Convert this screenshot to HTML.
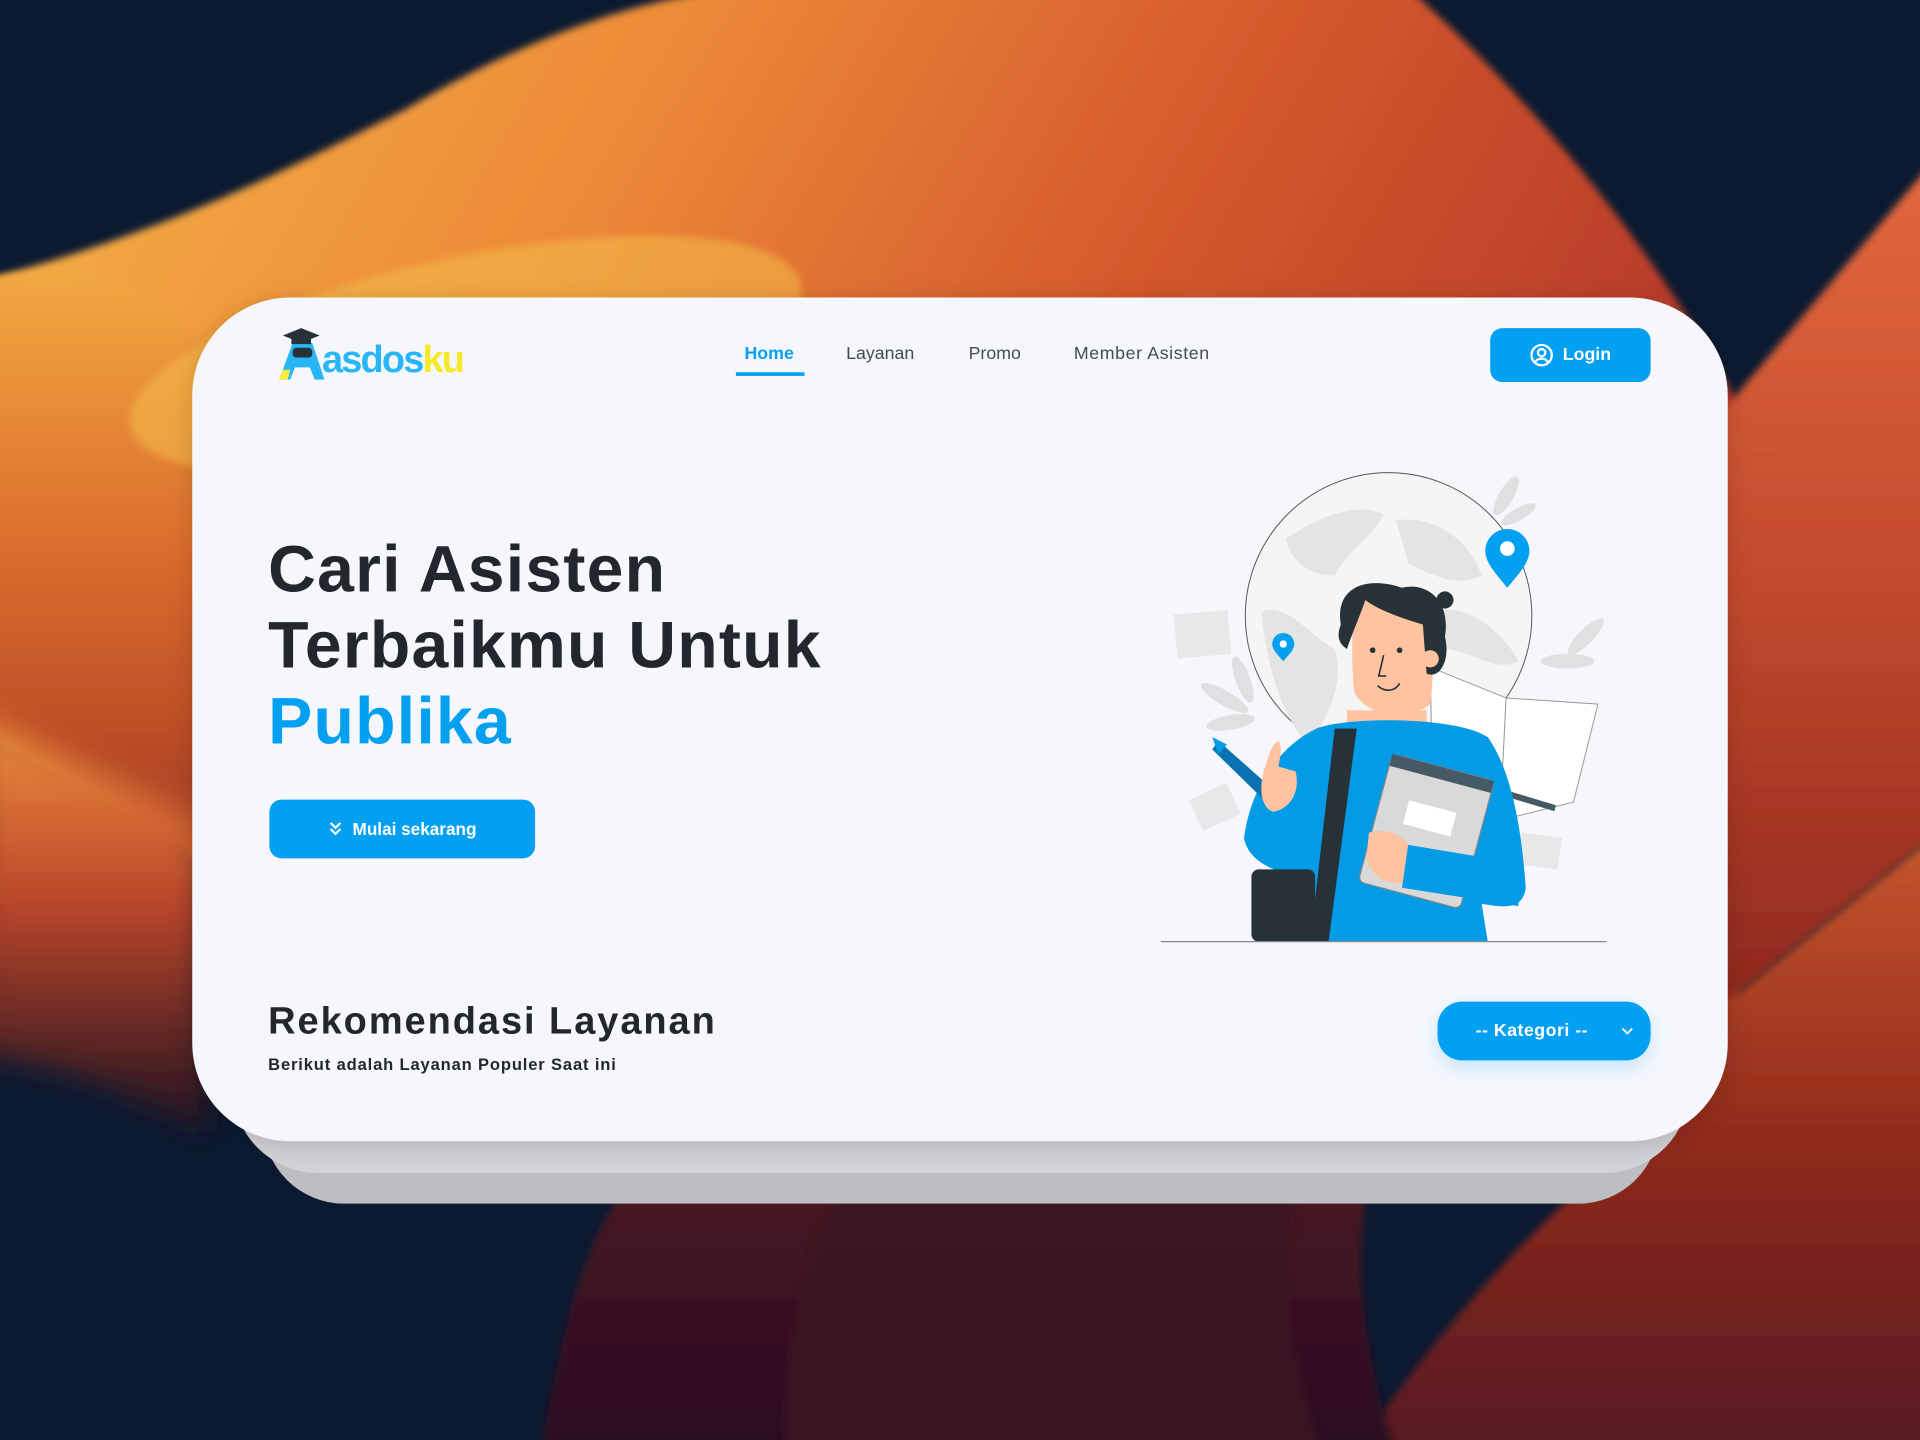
<!DOCTYPE html>
<html><head><meta charset="utf-8"><style>
html,body{margin:0;padding:0;width:1920px;height:1440px;overflow:hidden;background:#0b1a31;}
#s{position:absolute;left:0;top:0;width:1568px;height:1176px;transform:scale(1.22449);transform-origin:0 0;font-family:"Liberation Sans",sans-serif;}
.abs{position:absolute;}
.card{left:157px;top:243px;width:1254px;height:689px;border-radius:80px;background:#f5f7fc;}
.l2{left:190px;top:300px;width:1190px;height:658px;border-radius:70px;background:#d2d3d7;}
.l3{left:215px;top:330px;width:1140px;height:653px;border-radius:66px;background:#bdbec2;}
.nav{top:281px;font-size:14.5px;color:#454a52;}
.btn{background:#039ff0;color:#fff;font-weight:bold;display:flex;align-items:center;justify-content:center;}
h1{margin:0;position:absolute;left:219px;top:434px;font-size:54px;line-height:62px;font-weight:bold;color:#23262d;letter-spacing:1px;}
</style></head><body><div id="s">
<svg class="abs" style="left:0;top:0" width="1568" height="1176" viewBox="0 0 1568 1176">
<defs>
<linearGradient id="g1" x1="0" y1="0" x2="1" y2="0.4"><stop offset="0" stop-color="#f6b548"/><stop offset="0.35" stop-color="#ec8a38"/><stop offset="0.65" stop-color="#d4582c"/><stop offset="1" stop-color="#b0352a"/></linearGradient>
<linearGradient id="g0" x1="0" y1="0" x2="0" y2="1"><stop offset="0" stop-color="#f2a840"/><stop offset="0.5" stop-color="#d96a2c"/><stop offset="1" stop-color="#a33a24"/></linearGradient>
<linearGradient id="g2" x1="0" y1="0" x2="0" y2="1"><stop offset="0" stop-color="#ee903c"/><stop offset="0.45" stop-color="#b8452a"/><stop offset="1" stop-color="#1a1020"/></linearGradient>
<linearGradient id="g3" x1="0" y1="0" x2="0" y2="1"><stop offset="0" stop-color="#e2683f"/><stop offset="0.5" stop-color="#c24a2c"/><stop offset="1" stop-color="#8e281e"/></linearGradient>
<linearGradient id="g5" x1="0" y1="0" x2="0" y2="1"><stop offset="0" stop-color="#c4552c"/><stop offset="0.5" stop-color="#902a1c"/><stop offset="1" stop-color="#571a22"/></linearGradient>
<linearGradient id="g4" x1="0" y1="0" x2="0" y2="1"><stop offset="0" stop-color="#4a1622"/><stop offset="1" stop-color="#2a0c22"/></linearGradient>
<filter id="b"><feGaussianBlur stdDeviation="3"/></filter>
<filter id="b2"><feGaussianBlur stdDeviation="12"/></filter>
</defs>
<rect width="1568" height="1176" fill="#0b1a31"/>
<path filter="url(#b)" d="M-10,228 C150,185 250,130 330,90 C430,30 520,0 600,-10 L1150,-10 C1250,80 1350,200 1420,330 L1420,960 L320,960 C240,940 200,900 175,850 L160,700 L-10,600 Z" fill="url(#g1)"/>
<path filter="url(#b)" d="M-10,228 C80,210 140,240 180,300 L180,700 L-10,600 Z" fill="url(#g0)"/>
<ellipse cx="380" cy="290" rx="280" ry="80" transform="rotate(-12 380 290)" fill="#f6bd4c" opacity="0.55" filter="url(#b)"/>
<path filter="url(#b2)" d="M-20,583 L170,670 L170,930 C110,890 50,870 -20,860 Z" fill="url(#g2)"/>
<path filter="url(#b)" d="M1405,338 L1575,136 L1575,686 L1405,822 Z" fill="url(#g3)"/>
<path filter="url(#b)" d="M1405,822 L1575,686 L1575,1180 L1110,1180 C1200,1050 1300,950 1405,880 Z" fill="url(#g5)"/>
<path filter="url(#b)" d="M440,1190 C460,1080 480,1000 520,960 L1120,960 C1100,1040 1120,1120 1140,1190 Z" fill="url(#g4)"/>
<path filter="url(#b)" d="M640,1190 C640,1080 660,1000 700,960 L1060,960 C1040,1060 1060,1120 1080,1190 Z" fill="#3b1420" opacity="0.85"/>
</svg>
<div class="abs l3"></div>
<div class="abs l2"></div>
<div class="abs card" style="box-shadow:0 4px 20px rgba(0,0,0,0.15)"></div>

<!-- logo -->
<svg class="abs" style="left:225px;top:266px" width="170" height="48" viewBox="0 0 170 48">
<path d="M3,44 L14,14 L30,14 L40,44 L32,44 L28,34 L16,34 L12,44 Z" fill="#29b6f6"/>
<path d="M3,44 L6,36 L12,36 L10,44 Z" fill="#ffeb3b"/>
<rect x="14" y="18" width="16" height="8" rx="3" fill="#263238"/>
<path d="M6,8 L21,2 L36,8 L21,14 Z" fill="#263238"/><rect x="13" y="9" width="16" height="6" fill="#263238"/>
<text x="38" y="38" font-family="Liberation Sans" font-weight="bold" font-size="31" letter-spacing="-1.5" fill="#29b6f6">asdos<tspan fill="#f5e92a">ku</tspan></text>
</svg>

<div class="abs nav" style="left:608px;color:#039ff0;font-weight:bold">Home</div>
<div class="abs" style="left:601px;top:304px;width:56px;height:3px;background:#039ff0"></div>
<div class="abs nav" style="left:691px">Layanan</div>
<div class="abs nav" style="left:791px">Promo</div>
<div class="abs nav" style="left:877px;letter-spacing:0.5px">Member Asisten</div>

<div class="abs btn" style="left:1217px;top:268px;width:131px;height:44px;border-radius:10px;font-size:14.5px">
<svg width="20" height="20" viewBox="0 0 20 20" style="margin-right:7px"><circle cx="10" cy="10" r="8.3" fill="none" stroke="#fff" stroke-width="1.8"/><circle cx="10" cy="8" r="3" fill="none" stroke="#fff" stroke-width="1.8"/><path d="M5,15.5 C7,12 13,12 15,15.5" fill="none" stroke="#fff" stroke-width="1.8"/></svg>Login</div>

<h1>Cari Asisten<br>Terbaikmu Untuk<br><span style="color:#039ff0">Publika</span></h1>

<div class="abs btn" style="left:220px;top:653px;width:217px;height:48px;border-radius:10px;font-size:14px">
<svg width="12" height="14" viewBox="0 0 12 14" style="margin-right:8px"><path d="M2,2 L6,6 L10,2 M2,7 L6,11 L10,7" fill="none" stroke="#fff" stroke-width="1.8"/></svg>Mulai sekarang</div>

<div class="abs" style="left:219px;top:816px;font-size:31px;font-weight:bold;color:#23262d;letter-spacing:1.6px">Rekomendasi Layanan</div>
<div class="abs" style="left:219px;top:862px;font-size:13.5px;font-weight:bold;color:#23262d;letter-spacing:0.7px">Berikut adalah Layanan Populer Saat ini</div>

<div class="abs btn" style="left:1174px;top:818px;width:174px;height:48px;border-radius:20px;font-size:14.5px;box-shadow:0 6px 16px rgba(3,159,240,0.2)">
<span style="margin-right:20px;letter-spacing:0.4px">-- Kategori --</span>
<svg class="abs" style="right:14px;top:20px" width="10" height="8" viewBox="0 0 10 8"><path d="M1,2 L5,6 L9,2" fill="none" stroke="#fff" stroke-width="1.5"/></svg></div>

<!-- illustration -->
<svg class="abs" style="left:940px;top:380px" width="380" height="395" viewBox="0 0 380 395">
<circle cx="194" cy="123" r="117" fill="#f5f5f5" stroke="#555" stroke-width="0.8"/>
<path d="M110,60 C140,40 170,30 190,40 C180,60 160,70 150,90 C130,90 115,80 110,60Z M200,45 C230,40 260,60 270,90 C250,100 230,90 210,80Z M90,120 C110,110 130,140 150,150 C160,180 140,210 130,230 C110,210 95,170 90,120Z M230,120 C260,110 290,140 300,160 C280,170 260,150 240,150Z" fill="#e4e4e4"/>
<g fill="#e0e0e0"><ellipse cx="290" cy="25" rx="6" ry="18" transform="rotate(30 290 25)"/><ellipse cx="300" cy="40" rx="16" ry="5" transform="rotate(-30 300 40)"/><ellipse cx="355" cy="140" rx="20" ry="6" transform="rotate(-45 355 140)"/><ellipse cx="340" cy="160" rx="22" ry="6"/><ellipse cx="60" cy="190" rx="22" ry="6" transform="rotate(30 60 190)"/><ellipse cx="65" cy="210" rx="20" ry="6" transform="rotate(-10 65 210)"/><ellipse cx="75" cy="175" rx="6" ry="20" transform="rotate(-20 75 175)"/></g>
<g fill="#e8e8e8"><rect x="20" y="120" width="44" height="36" transform="rotate(-5 42 138)"/><rect x="35" y="265" width="34" height="28" transform="rotate(-25 52 279)"/><rect x="300" y="302" width="34" height="26" transform="rotate(8 317 315)"/></g>
<path d="M291,52 C281,52 273,60 273,70 C273,80 283,90 291,100 C299,90 309,80 309,70 C309,60 301,52 291,52Z" fill="#039ff0"/><circle cx="291" cy="68" r="6" fill="#fff"/>
<path d="M108,137 C103,137 99,141 99,146 C99,151 104,155 108,160 C112,155 117,151 117,146 C117,141 113,137 108,137Z" fill="#039ff0"/><circle cx="108" cy="146" r="3" fill="#fff"/>
<path d="M228,165 L290,190 L285,290 L230,265 Z" fill="#fff" stroke="#999" stroke-width="0.8"/>
<path d="M290,190 L365,195 L345,275 L285,290 Z" fill="#fff" stroke="#999" stroke-width="0.8"/>
<path d="M280,265 L330,280" stroke="#455a64" stroke-width="5"/>
<path d="M160,200 L225,200 L225,215 L160,215Z" fill="#ffc3a0"/>
<path d="M135,215 C160,205 250,205 275,222 C295,250 303,300 306,345 C304,362 290,362 270,358 L275,389 L130,389 L128,345 C110,330 82,330 76,305 C80,270 100,232 135,215 Z" fill="#039be5"/>
<path d="M55,225 L100,265 L92,273 L50,232 Z" fill="#0a72b0"/><path d="M50,222 L62,228 L55,236Z" fill="#039be5"/>
<path d="M92,250 C95,240 98,228 104,225 C108,230 105,240 104,246 L118,250 C122,265 115,280 100,283 C90,280 88,265 92,250Z" fill="#ffc3a0"/>
<path d="M150,215 L168,215 L145,389 L130,389 Z" fill="#263238"/>
<rect x="82" y="330" width="52" height="59" rx="6" fill="#263238"/>
<g transform="rotate(15 225 298)"><rect x="182" y="245" width="86" height="108" rx="5" fill="#d9d9d9" stroke="#888" stroke-width="1"/><rect x="182" y="245" width="86" height="10" fill="#455a64"/><rect x="205" y="278" width="40" height="20" fill="#fff"/></g>
<path d="M178,300 C195,295 212,305 215,320 L210,340 C195,345 178,335 176,320Z" fill="#ffc3a0"/>
<path d="M210,310 L300,325 L300,360 L205,345 Z" fill="#039be5"/>
<path d="M165,110 C165,130 163,160 166,185 C175,205 210,210 228,195 C232,170 230,130 225,110 Z" fill="#ffc3a0"/>
<path d="M155,130 C150,100 175,90 205,100 C225,95 245,110 240,140 C245,160 235,175 225,170 L222,130 C205,125 185,118 175,110 C170,125 165,135 160,150 C152,145 152,138 155,130Z" fill="#263238"/>
<circle cx="240" cy="110" r="7" fill="#263238"/>
<circle cx="228" cy="158" r="7" fill="#ffc3a0"/>
<circle cx="181" cy="151" r="2.3" fill="#263238"/><circle cx="203" cy="151" r="2.3" fill="#263238"/>
<path d="M190,155 L186,172 L192,172 M185,180 C192,186 200,184 203,178" fill="none" stroke="#263238" stroke-width="1.3"/>
<line x1="8" y1="389" x2="372" y2="389" stroke="#888" stroke-width="1"/>
</svg>
</div></body></html>
